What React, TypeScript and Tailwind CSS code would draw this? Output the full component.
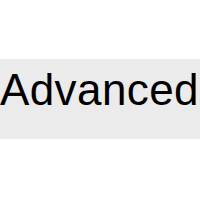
export default function App() {
  return (
    <div className="w-[200px] h-[200px] bg-white overflow-hidden">
      <div className="mt-[59px] h-[80px] bg-[#ebebeb] flex items-start pt-[9px]">
        <span className="text-[44px] leading-none tracking-[0.4px] text-black whitespace-nowrap" style={{ fontFamily: '"Liberation Sans", Arial, sans-serif' }}>
          Advanced
        </span>
      </div>
    </div>
  );
}
